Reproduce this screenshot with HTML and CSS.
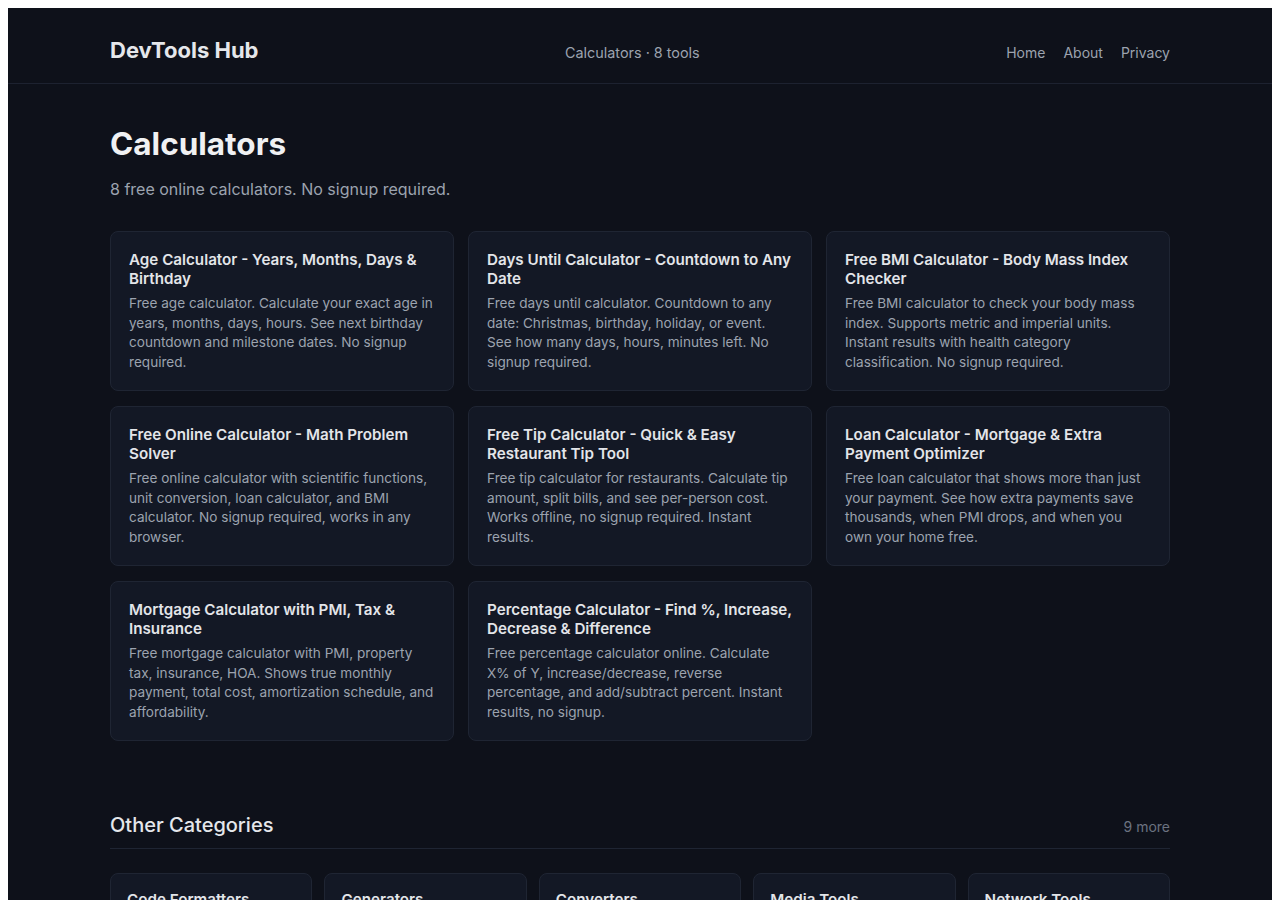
FILE: index.html
```html
<!DOCTYPE html>
<html lang="en">
<head>
<meta charset="utf-8">
<title>Calculators - DevTools Hub</title>
<link rel="stylesheet" href="styles.css">
</head>
<body>
<div class="page">
  <header class="site-header">
    <div class="wrap header-row">
      <a class="logo" href="#">DevTools Hub</a>
      <span class="crumb">Calculators · 8 tools</span>
      <nav class="nav">
        <a href="#">Home</a>
        <a href="#">About</a>
        <a href="#">Privacy</a>
      </nav>
    </div>
  </header>

  <main class="wrap main">
    <h1 class="title">Calculators</h1>
    <p class="lead">8 free online calculators. No signup required.</p>

    <div class="tool-grid">
      <a class="tool-card" href="#">
        <h3>Age Calculator - Years, Months, Days &amp; Birthday</h3>
        <p>Free age calculator. Calculate your exact age in years, months, days, hours. See next birthday countdown and milestone dates. No signup required.</p>
      </a>
      <a class="tool-card" href="#">
        <h3>Days Until Calculator - Countdown to Any Date</h3>
        <p>Free days until calculator. Countdown to any date: Christmas, birthday, holiday, or event. See how many days, hours, minutes left. No signup required.</p>
      </a>
      <a class="tool-card" href="#">
        <h3>Free BMI Calculator - Body Mass Index Checker</h3>
        <p>Free BMI calculator to check your body mass index. Supports metric and imperial units. Instant results with health category classification. No signup required.</p>
      </a>
      <a class="tool-card" href="#">
        <h3>Free Online Calculator - Math Problem Solver</h3>
        <p>Free online calculator with scientific functions, unit conversion, loan calculator, and BMI calculator. No signup required, works in any browser.</p>
      </a>
      <a class="tool-card" href="#">
        <h3>Free Tip Calculator - Quick &amp; Easy Restaurant Tip Tool</h3>
        <p>Free tip calculator for restaurants. Calculate tip amount, split bills, and see per-person cost. Works offline, no signup required. Instant results.</p>
      </a>
      <a class="tool-card" href="#">
        <h3>Loan Calculator - Mortgage &amp; Extra Payment Optimizer</h3>
        <p>Free loan calculator that shows more than just your payment. See how extra payments save thousands, when PMI drops, and when you own your home free.</p>
      </a>
      <a class="tool-card" href="#">
        <h3>Mortgage Calculator with PMI, Tax &amp; Insurance</h3>
        <p>Free mortgage calculator with PMI, property tax, insurance, HOA. Shows true monthly payment, total cost, amortization schedule, and affordability.</p>
      </a>
      <a class="tool-card" href="#">
        <h3>Percentage Calculator - Find %, Increase, Decrease &amp; Difference</h3>
        <p>Free percentage calculator online. Calculate X% of Y, increase/decrease, reverse percentage, and add/subtract percent. Instant results, no signup.</p>
      </a>
    </div>

    <section class="others">
      <div class="others-head">
        <h2>Other Categories</h2>
        <span class="more">9 more</span>
      </div>
      <div class="cat-grid">
        <a class="cat-card" href="#"><h3>Code Formatters</h3><p>12 tools</p></a>
        <a class="cat-card" href="#"><h3>Generators</h3><p>10 tools</p></a>
        <a class="cat-card" href="#"><h3>Converters</h3><p>9 tools</p></a>
        <a class="cat-card" href="#"><h3>Media Tools</h3><p>7 tools</p></a>
        <a class="cat-card" href="#"><h3>Network Tools</h3><p>6 tools</p></a>
      </div>
    </section>
  </main>
</div>
</body>
</html>
```

FILE: styles.css
```css
body {
	background: #fff;
	font-family: Inter, "Noto Sans", sans-serif;
}
a {
	text-decoration: none;
	color: inherit;
}
.page {
	background: #0e111a;
	color: #e5e7eb;
	min-height: 1200px;
}
.wrap {
	max-width: 1060px;
	margin: 0 auto;
}

/* header */
.site-header {
	border-bottom: 1px solid #1d2230;
}
.header-row {
	display: flex;
	justify-content: space-between;
	align-items: baseline;
	padding: 26px 0 16px;
}
.logo {
	font-size: 22px;
	font-weight: 700;
	line-height: 33px;
	color: #e5e7eb;
}
.crumb {
	font-size: 14.4px;
	color: #9ca3af;
}
.nav {
	display: flex;
	gap: 18px;
	font-size: 14px;
	color: #9ca3af;
}

/* main */
.main {
	padding-top: 41px;
}
.title {
	margin: 0;
	font-size: 31.5px;
	line-height: 38px;
	font-weight: 700;
	color: #f0f1f3;
}
.lead {
	margin: 14px 0 30px;
	font-size: 16px;
	line-height: 24px;
	color: #9ca3af;
}
.tool-grid {
	display: grid;
	grid-template-columns: repeat(3, 1fr);
	gap: 15px 14px;
}
.tool-card {
	display: block;
	background: #131825;
	border: 1px solid #1f2533;
	border-radius: 8px;
	padding: 18px;
}
.tool-card h3 {
	margin: 0;
	font-size: 15.2px;
	line-height: 19px;
	font-weight: 600;
	color: #e3e5e9;
}
.tool-card p {
	margin: 6px 0 0;
	font-size: 13.6px;
	line-height: 19.5px;
	color: #9ca3af;
}

/* other categories */
.others {
	margin-top: 70px;
}
.others-head {
	display: flex;
	justify-content: space-between;
	align-items: baseline;
	padding-bottom: 9px;
	border-bottom: 1px solid #1f2533;
}
.others-head h2 {
	margin: 0;
	font-size: 20px;
	line-height: 28px;
	font-weight: 500;
	color: #e5e7eb;
}
.more {
	font-size: 14px;
	color: #6b7280;
}
.cat-grid {
	display: grid;
	grid-template-columns: repeat(5, 1fr);
	gap: 12px;
	margin-top: 24px;
}
.cat-card {
	display: block;
	background: #131825;
	border: 1px solid #1f2533;
	border-radius: 8px;
	padding: 16px;
}
.cat-card h3 {
	margin: 0;
	font-size: 15.2px;
	line-height: 19px;
	font-weight: 600;
	color: #e3e5e9;
}
.cat-card p {
	margin: 4px 0 0;
	font-size: 13px;
	color: #6b7280;
}
```
